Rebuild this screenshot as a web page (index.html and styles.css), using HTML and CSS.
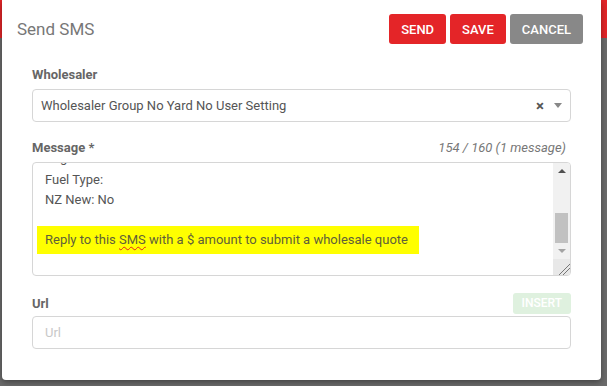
FILE: index.html
```html
<!DOCTYPE html>
<html lang="en">
<head>
    <meta charset="UTF-8">
    <meta name="viewport" content="width=device-width, initial-scale=1.0">
    <title>Send SMS</title>
    <link rel="stylesheet" href="styles.css">
</head>
<body>
    <div class="modal">
        <div class="modal-header">
            <h1>Send SMS</h1>
            <div class="actions">
                <button type="button" class="btn btn-red">Send</button>
                <button type="button" class="btn btn-red">Save</button>
                <button type="button" class="btn btn-grey">Cancel</button>
            </div>
        </div>

        <div class="modal-body">
            <div class="form-group">
                <div class="label-row">
                    <label>Wholesaler</label>
                </div>
                <div class="select">
                    <span class="select-value">Wholesaler Group No Yard No User Setting</span>
                    <span class="select-clear">&times;</span>
                    <span class="select-arrow"></span>
                </div>
            </div>

            <div class="form-group">
                <div class="label-row">
                    <label>Message *</label>
                    <span class="counter">154 / 160 (1 message)</span>
                </div>
                <div class="message-box">
                    <div class="message-text">
                        <div class="line hidden-line">Rego:</div>
                        <div class="line">Fuel Type:</div>
                        <div class="line">NZ New: No</div>
                        <div class="line blank"></div>
                        <div class="highlight">Reply to this <span class="typo">SMS</span> with a $ amount to submit a wholesale quote</div>
                    </div>
                    <div class="scrollbar">
                        <span class="arrow-up"></span>
                        <span class="track"><span class="thumb"></span></span>
                        <span class="arrow-down"></span>
                        <span class="resize"></span>
                    </div>
                </div>
            </div>

            <div class="form-group">
                <div class="label-row url-row">
                    <label>Url</label>
                    <button type="button" class="btn btn-insert">Insert</button>
                </div>
                <input type="text" class="input" placeholder="Url">
            </div>
        </div>
    </div>
</body>
</html>
```

FILE: styles.css
```css
:root {
    --red: #e42528;
    --grey-btn: #888888;
    --label: #666666;
    --text: #555555;
    --border: #d6d6d6;
}

* {
    box-sizing: border-box;
}

body {
    margin: 0;
    height: 386px;
    overflow: hidden;
    font-family: Roboto, 'Noto Sans', sans-serif;
    background: linear-gradient(to bottom, var(--red) 0, var(--red) 38px, #6b6b6b 38px);
}

.modal {
    margin-left: 2px;
    width: 599px;
    height: 380px;
    background: #fff;
    border-radius: 0 0 4px 4px;
    box-shadow: 0 2px 6px rgba(0, 0, 0, 0.4);
}

.modal-header {
    height: 58px;
    display: flex;
    align-items: center;
    justify-content: space-between;
    padding: 0 18px 0 15px;
}

h1 {
    margin: 0;
    font-size: 17px;
    font-weight: 400;
    color: #777;
}

.actions {
    display: flex;
    gap: 4px;
}

.btn {
    height: 30px;
    padding: 0 12px;
    border: none;
    border-radius: 3px;
    color: #fff;
    font-family: inherit;
    font-size: 13px;
    font-weight: 500;
    text-transform: uppercase;
    cursor: pointer;
}

.btn-red {
    background: var(--red);
}

.btn-grey {
    background: var(--grey-btn);
}

.btn-insert {
    height: 21px;
    padding: 0 9px;
    background: #dff1df;
    font-size: 12px;
    border-radius: 3px;
}

.modal-body {
    padding: 8px 30px 0 30px;
}

.form-group {
    margin-bottom: 17px;
}

.label-row {
    display: flex;
    align-items: center;
    justify-content: space-between;
    height: 16px;
    margin-bottom: 7px;
}

.url-row {
    height: 20px;
    margin-bottom: 3px;
}

label {
    font-size: 13px;
    font-weight: 700;
    color: var(--label);
}

.counter {
    font-size: 13px;
    font-style: italic;
    color: #777;
    padding-right: 5px;
}

.select {
    height: 33px;
    border: 1px solid var(--border);
    border-radius: 4px;
    display: flex;
    align-items: center;
    padding: 0 8px 0 8px;
    font-size: 13px;
    color: var(--text);
}

.select-value {
    flex: 1;
}

.select-clear {
    font-size: 15px;
    font-weight: 700;
    color: #555;
    margin-right: 10px;
}

.select-arrow {
    width: 0;
    height: 0;
    border-left: 4px solid transparent;
    border-right: 4px solid transparent;
    border-top: 5px solid #888;
}

.message-box {
    height: 114px;
    border: 1px solid var(--border);
    border-radius: 4px;
    display: flex;
    overflow: hidden;
}

.message-text {
    flex: 1;
    padding: 0 12px 0 4px;
    font-size: 13px;
    color: var(--text);
    line-height: 20px;
    margin-top: -13px;
}

.line {
    padding-left: 8px;
}

.hidden-line {
    height: 20px;
    line-height: 16px;
    overflow: hidden;
}

.blank {
    height: 16px;
}

.highlight {
    display: inline-block;
    background: #ffff00;
    padding: 4px 11px 4px 8px;
    line-height: 20px;
    color: #5f5f3a;
}

.typo {
    text-decoration: underline wavy #e02020;
    text-decoration-thickness: 1px;
    text-underline-offset: 2px;
}

.scrollbar {
    width: 17px;
    background: #f1f1f1;
    display: flex;
    flex-direction: column;
    align-items: center;
}

.arrow-up,
.arrow-down {
    width: 0;
    height: 0;
    margin: 6px 0;
    border-left: 4px solid transparent;
    border-right: 4px solid transparent;
}

.arrow-up {
    border-bottom: 4px solid #505050;
}

.arrow-down {
    border-top: 4px solid #a3a3a3;
}

.track {
    flex: 1;
    width: 100%;
    padding: 34px 2px 0 2px;
}

.thumb {
    display: block;
    width: 100%;
    height: 30px;
    background: #c1c1c1;
}

.resize {
    width: 100%;
    height: 16px;
    background: #e8e8e8 linear-gradient(135deg, transparent 15px, #777 15px, #777 16px, transparent 16px, transparent 18px, #777 18px, #777 19px, transparent 19px);
}

.input {
    display: block;
    width: 100%;
    height: 33px;
    border: 1px solid var(--border);
    border-radius: 4px;
    padding: 0 12px;
    font-family: inherit;
    font-size: 13px;
    color: var(--text);
}

.input::placeholder {
    color: #c8c8c8;
}
```
